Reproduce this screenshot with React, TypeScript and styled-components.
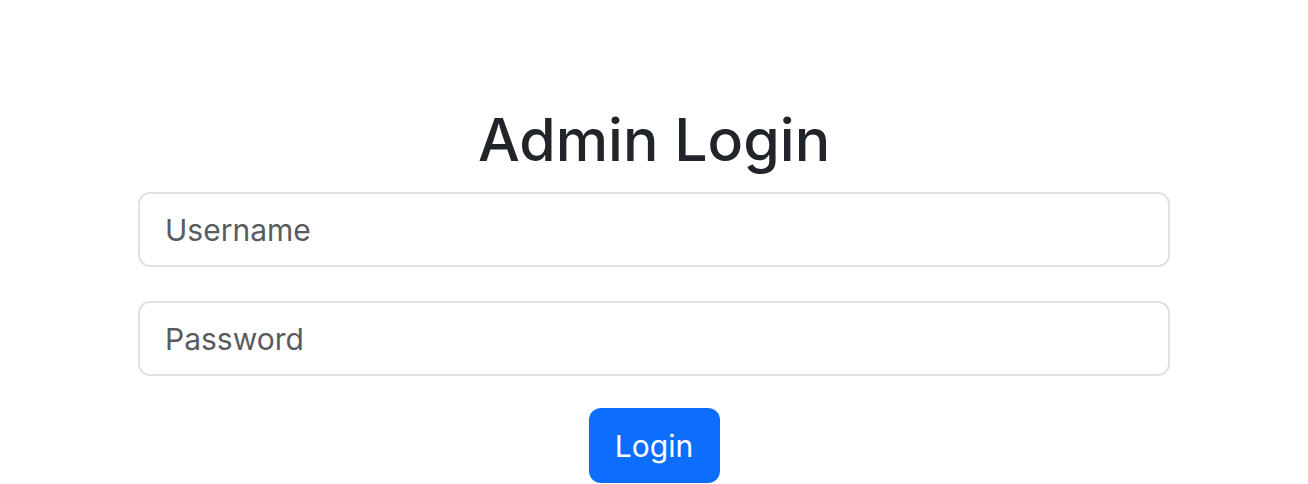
import React from "react";
import styled, { createGlobalStyle } from "styled-components";

const GlobalStyle = createGlobalStyle`
  html, body {
    margin: 0;
    padding: 0;
    background: #ffffff;
  }
  body {
    font-family: Inter, "Noto Sans", "Liberation Sans", sans-serif;
    color: #212529;
  }
  * { box-sizing: border-box; }
`;

const Page = styled.main`
  display: flex;
  justify-content: center;
  padding-top: 104px;
`;

const Form = styled.form`
  width: 1032px;
  display: flex;
  flex-direction: column;
  align-items: stretch;
`;

const Title = styled.h1`
  margin: 0 0 16px;
  text-align: center;
  font-size: 59px;
  line-height: 72px;
  font-weight: 500;
  color: #212529;
`;

const Field = styled.input`
  display: block;
  width: 100%;
  height: 75px;
  margin: 0 0 34px;
  padding: 0 25px;
  font-family: inherit;
  font-size: 30px;
  line-height: 45px;
  color: #212529;
  background: #fff;
  border: 2px solid #dee2e6;
  border-radius: 12px;
  outline: none;
  &::placeholder {
    color: #595c5f;
    opacity: 1;
  }
`;

const Actions = styled.div`
  display: flex;
  justify-content: center;
  margin-top: -2px;
`;

const Button = styled.button`
  width: 131px;
  height: 75px;
  padding: 0;
  font-family: inherit;
  font-size: 30px;
  font-weight: 400;
  color: #ffffff;
  background: #0d6efd;
  border: none;
  border-radius: 12px;
  cursor: pointer;
`;

export default function App() {
  return (
    <>
      <GlobalStyle />
      <Page>
        <Form onSubmit={(e) => e.preventDefault()}>
          <Title>Admin Login</Title>
          <Field type="text" placeholder="Username" />
          <Field type="password" placeholder="Password" />
          <Actions>
            <Button type="submit">Login</Button>
          </Actions>
        </Form>
      </Page>
    </>
  );
}
